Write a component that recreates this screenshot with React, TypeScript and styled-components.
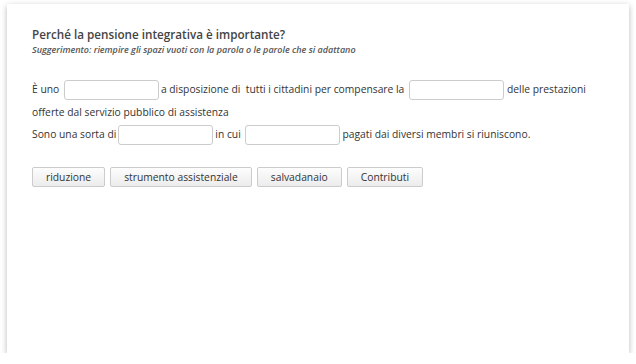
import React from "react";
import styled, { createGlobalStyle } from "styled-components";

const Global = createGlobalStyle`
  html, body { margin: 0; padding: 0; background: #ffffff; }
  body { font-family: "Open Sans", "Liberation Sans", sans-serif; }
`;

const Card = styled.div`
  box-sizing: border-box;
  margin: 4px 7px 0 7px;
  width: 622px;
  height: 349px;
  background: #fff;
  box-shadow: 0 2px 6px rgba(0, 0, 0, 0.28);
  padding: 23px 25px 0 25px;
`;

const Title = styled.h2`
  margin: 0;
  font-size: 11.7px;
  font-weight: 600;
  color: #444;
  line-height: 15px;
`;

const Hint = styled.div`
  margin-top: 2px;
  font-size: 9px;
  font-style: italic;
  font-weight: 600;
  color: #555;
  line-height: 12px;
`;

const Passage = styled.div`
  margin-top: 22px;
  font-size: 10.3px;
  color: #333;
  line-height: 22.5px;
  width: 570px;
`;

const Line = styled.div``;

const Blank = styled.span<{ $l?: number; $r?: number }>`
  display: inline-block;
  box-sizing: border-box;
  width: 95px;
  height: 20px;
  vertical-align: middle;
  border: 1px solid #ccc;
  border-radius: 3px;
  background: #fff;
  margin: 0 ${(p) => p.$r ?? 2}px 0 ${(p) => p.$l ?? 0}px;
`;

const Bank = styled.div`
  margin-top: 21px;
  display: flex;
  gap: 5px;
`;

const Chip = styled.button`
  box-sizing: border-box;
  height: 20px;
  padding: 0 13px;
  font-family: "Open Sans", "Liberation Sans", sans-serif;
  font-size: 10.3px;
  color: #333;
  border: 1px solid #ccc;
  border-radius: 2px;
  background: linear-gradient(#fdfdfd, #ececec);
  cursor: pointer;
`;

export default function App() {
  return (
    <>
      <Global />
      <Card>
        <Title>Perché la pensione integrativa è importante?</Title>
        <Hint>Suggerimento: riempire gli spazi vuoti con la parola o le parole che si adattano</Hint>
        <Passage>
          <Line>
            È uno <Blank $l={2} />a disposizione di&nbsp; tutti i cittadini per compensare la <Blank $l={2} $r={3} />delle prestazioni offerte dal servizio pubblico di assistenza
          </Line>
          <Line>
            Sono una sorta di<Blank $l={2} />in cui <Blank $l={2} />pagati dai diversi membri si riuniscono.
          </Line>
        </Passage>
        <Bank>
          <Chip>riduzione</Chip>
          <Chip>strumento assistenziale</Chip>
          <Chip>salvadanaio</Chip>
          <Chip>Contributi</Chip>
        </Bank>
      </Card>
    </>
  );
}
